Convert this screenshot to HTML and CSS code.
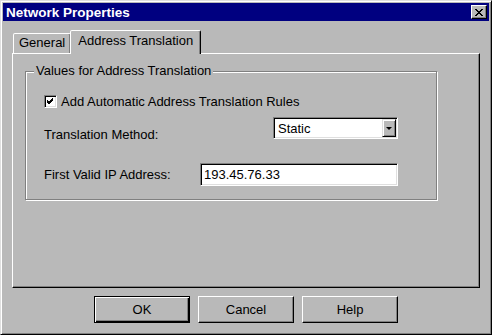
FILE: index.html
```html
<!DOCTYPE html>
<html lang="en">
<head>
  <meta charset="UTF-8">
  <title>Network Properties</title>
  <link rel="stylesheet" href="styles.css">
</head>
<body>

<div class="window">
  <!-- Title bar -->
  <div class="titlebar">
    <span class="title">Network Properties</span>
    <button class="close" type="button">
      <svg width="8" height="7" viewBox="0 0 8 7">
        <path d="M0 0 L7 7 M1 0 L8 7 M7 0 L0 7 M8 0 L1 7" stroke="#000" stroke-width="1" fill="none"/>
      </svg>
    </button>
  </div>

  <div class="dialog-body">
    <!-- Tabs -->
    <div class="tabs">
      <div class="tab">General</div>
      <div class="tab tab-active">Address Translation</div>
    </div>

    <div class="panel">
      <div class="group">
        <span class="legend">Values for Address Translation</span>

        <div class="check-row">
          <span class="checkbox">
            <svg width="7" height="7" viewBox="0 0 7 7">
              <path d="M0 2 L2 4 L6 0 M0 3 L2 5 L6 1 M0 4 L2 6 L6 2" stroke="#000" stroke-width="1" fill="none"/>
            </svg>
          </span>
          <span class="check-label">Add Automatic Address Translation Rules</span>
        </div>

        <div class="field-row method-row">
          <span class="field-label method-label">Translation Method:</span>
          <div class="select">
            <span class="select-value">Static</span>
            <span class="drop-btn"><span class="arrow"></span></span>
          </div>
        </div>

        <div class="field-row ip-row">
          <span class="field-label ip-label">First Valid IP Address:</span>
          <div class="textbox">193.45.76.33</div>
        </div>
      </div>
    </div>

    <!-- Dialog buttons -->
    <div class="buttons">
      <button class="btn btn-default" type="button">OK</button>
      <button class="btn" type="button">Cancel</button>
      <button class="btn" type="button">Help</button>
    </div>
  </div>
</div>

</body>
</html>
```

FILE: styles.css
```css
/* General Styles */
* {
  box-sizing: border-box;
}
body {
  margin: 0;
  background-color: #b9b9b9;
  font-family: "Liberation Sans", Arial, sans-serif;
  font-size: 13px;
  color: #000;
}

/* Window frame */
.window {
  width: 492px;
  height: 335px;
  padding: 2px;
  background-color: #b9b9b9;
  border: 1px solid;
  border-color: #dfdfdf #000 #000 #dfdfdf;
  box-shadow: inset 1px 1px #fff, inset -1px -1px #808080;
}
.titlebar {
  height: 18px;
  background-color: #000080;
  display: flex;
  align-items: center;
  justify-content: space-between;
  padding: 0 2px 0 3px;
}
.title {
  color: #fff;
  font-weight: bold;
  font-size: 13.5px;
}
.close {
  width: 16px;
  height: 14px;
  padding: 0;
  background-color: #b9b9b9;
  border: 1px solid;
  border-color: #fff #000 #000 #fff;
  box-shadow: inset -1px -1px #808080;
  display: flex;
  align-items: center;
  justify-content: center;
}

.dialog-body {
  padding: 9px 9px 0 9px;
}

/* Tabs */
.tabs {
  display: flex;
  align-items: flex-end;
  height: 23px;
  padding-left: 1px;
}
.tab {
  height: 20px;
  padding: 0 5px;
  line-height: 18px;
  border: 1px solid;
  border-bottom: none;
  border-color: #fff #000 transparent #fff;
  border-radius: 2px 2px 0 0;
  box-shadow: inset -1px 0 #808080;
  background-color: #b9b9b9;
}
.tab-active {
  position: relative;
  z-index: 1;
  height: 24px;
  margin-bottom: -1px;
  margin-left: -1px;
  padding: 0 7px;
  line-height: 20px;
}

.panel {
  height: 235px;
  padding: 17px 0 0 12px;
  border: 1px solid;
  border-color: #fff #000 #000 #fff;
  box-shadow: inset -1px -1px #808080;
}

/* Group box */
.group {
  position: relative;
  width: 412px;
  padding: 23px 38px 13px 18px;
  border: 1px solid #808080;
  box-shadow: inset 1px 1px #fff, 1px 1px #fff;
}
.legend {
  position: absolute;
  top: -9px;
  left: 8px;
  padding: 0 2px;
  line-height: 16px;
  background-color: #b9b9b9;
}

.check-row {
  display: flex;
  align-items: center;
  height: 13px;
}
.checkbox {
  width: 13px;
  height: 13px;
  background-color: #fff;
  border: 1px solid;
  border-color: #808080 #fff #fff #808080;
  box-shadow: inset 1px 1px #000, inset -1px -1px #dfdfdf;
  display: flex;
  align-items: center;
  justify-content: center;
}
.check-label {
  margin-left: 4px;
}

.field-row {
  display: flex;
  justify-content: space-between;
  align-items: flex-start;
}
.method-row {
  margin-top: 9px;
}
.ip-row {
  margin-top: 20px;
}
.field-label {
  line-height: 16px;
}
.method-label {
  margin-top: 10px;
}
.ip-label {
  margin-top: 4px;
}

/* Sunken controls */
.select,
.textbox {
  background-color: #fff;
  border: 1px solid;
  border-color: #808080 #fff #fff #808080;
  box-shadow: inset 1px 1px #000, inset -1px -1px #dfdfdf;
}
.select {
  width: 125px;
  height: 22px;
  padding: 2px 2px 2px 4px;
  display: flex;
  align-items: center;
  justify-content: space-between;
}
.drop-btn {
  width: 14px;
  height: 18px;
  margin-right: -1px;
  background-color: #b9b9b9;
  border: 1px solid;
  border-color: #dfdfdf #000 #000 #dfdfdf;
  box-shadow: inset 1px 1px #fff, inset -1px -1px #808080;
  display: flex;
  align-items: center;
  justify-content: center;
}
.arrow {
  width: 0;
  height: 0;
  border-left: 3px solid transparent;
  border-right: 3px solid transparent;
  border-top: 3px solid #000;
}
.textbox {
  width: 198px;
  height: 23px;
  padding: 0 3px;
  line-height: 21px;
}

/* Buttons */
.buttons {
  display: flex;
  justify-content: center;
  gap: 8px;
  margin-top: 8px;
}
.btn {
  width: 96px;
  height: 27px;
  padding: 0;
  font-family: inherit;
  font-size: 13px;
  color: #000;
  background-color: #b9b9b9;
  border: 1px solid;
  border-color: #fff #000 #000 #fff;
  box-shadow: inset -1px -1px #808080;
}
.btn-default {
  border-color: #000;
  box-shadow: inset 1px 1px #fff, inset -1px -1px #000, inset -2px -2px #808080;
}
```
